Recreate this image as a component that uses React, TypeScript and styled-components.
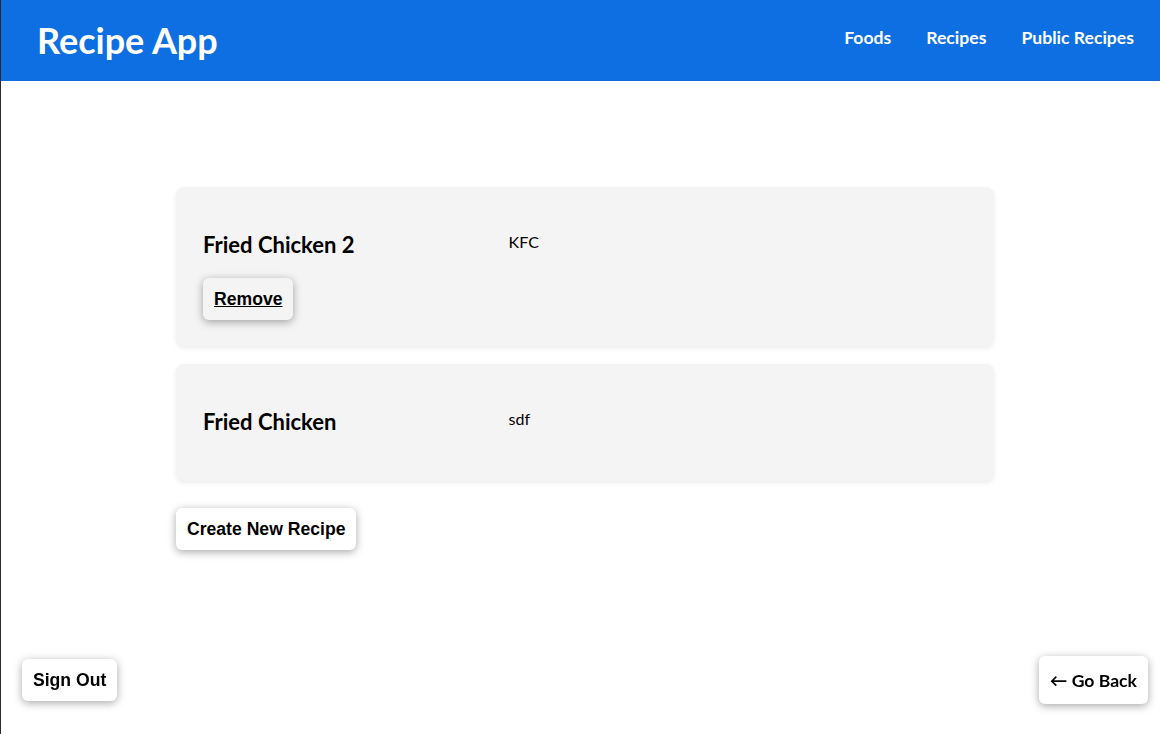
import React from "react";
import styled, { createGlobalStyle } from "styled-components";

const Global = createGlobalStyle`
  html, body { margin: 0; padding: 0; }
  body {
    background: #ffffff;
    font-family: "Lato", "Noto Sans", sans-serif;
    color: #000;
    border-left: 1px solid #2a2a2a;
    min-height: 734px;
    box-sizing: border-box;
  }
`;

const Header = styled.header`
  height: 81px;
  background: #0d6fe1;
  display: flex;
  align-items: center;
  justify-content: space-between;
  padding: 0 26px 0 36px;
`;

const Brand = styled.h1`
  margin: 0;
  color: #fff;
  font-family: "Lato", sans-serif;
  font-weight: 700;
  font-size: 36px;
  line-height: 1;
  padding-bottom: 2px;
`;

const Nav = styled.nav`
  display: flex;
  gap: 35px;
  padding-bottom: 6px;
`;

const NavLink = styled.a`
  color: #fff;
  text-decoration: none;
  font-family: "Lato", sans-serif;
  font-weight: 700;
  font-size: 17.6px;
`;

const Main = styled.main`
  width: 818px;
  margin: 106px auto 0 175px;
  display: flex;
  flex-direction: column;
  gap: 18px;
`;

const Card = styled.section`
  background: #f4f4f4;
  border-radius: 8px;
  box-shadow: 0 2px 5px rgba(0, 0, 0, 0.08);
  padding: 26px 27px 26px;
  display: grid;
  grid-template-columns: 40% 1fr;
  align-items: start;
`;

const Left = styled.div`
  display: flex;
  flex-direction: column;
  align-items: flex-start;
`;

const Name = styled.h2`
  margin: 19px 0 21px;
  font-family: "Lato", sans-serif;
  font-size: 22px;
  font-weight: 700;
  line-height: 25px;
`;

const Desc = styled.p`
  margin: 19px 0 0;
  font-family: "Lato", sans-serif;
  font-size: 16px;
  line-height: 19px;
`;

const Button = styled.button<{ $bg?: string; $underline?: boolean }>`
  border: none;
  border-radius: 6px;
  background: ${(p) => p.$bg || "#ffffff"};
  box-shadow: 0 2px 8px rgba(0, 0, 0, 0.35);
  height: 42px;
  padding: 0 11px;
  font-family: "Liberation Sans", Arial, sans-serif;
  font-weight: 700;
  font-size: 17.6px;
  color: #000;
  text-decoration: ${(p) => (p.$underline ? "underline" : "none")};
  cursor: pointer;
`;

const CreateRow = styled.div`
  margin-top: 9px;
`;

const SignOut = styled(Button)`
  position: fixed;
  left: 22px;
  bottom: 33px;
`;

const GoBack = styled(Button)`
  position: fixed;
  right: 12px;
  bottom: 30px;
  height: 48px;
  font-family: "Lato", sans-serif;
  font-size: 17.6px;
`;

const recipes = [
  { name: "Fried Chicken 2", desc: "KFC", removable: true },
  { name: "Fried Chicken", desc: "sdf", removable: false },
];

export default function App() {
  return (
    <>
      <Global />
      <Header>
        <Brand>Recipe App</Brand>
        <Nav>
          <NavLink href="#">Foods</NavLink>
          <NavLink href="#">Recipes</NavLink>
          <NavLink href="#">Public Recipes</NavLink>
        </Nav>
      </Header>
      <Main>
        {recipes.map((r) => (
          <Card key={r.name}>
            <Left>
              <Name>{r.name}</Name>
              {r.removable && (
                <Button $bg="#f4f4f4" $underline>
                  Remove
                </Button>
              )}
            </Left>
            <Desc>{r.desc}</Desc>
          </Card>
        ))}
        <CreateRow>
          <Button>Create New Recipe</Button>
        </CreateRow>
      </Main>
      <SignOut>Sign Out</SignOut>
      <GoBack>← Go Back</GoBack>
    </>
  );
}
